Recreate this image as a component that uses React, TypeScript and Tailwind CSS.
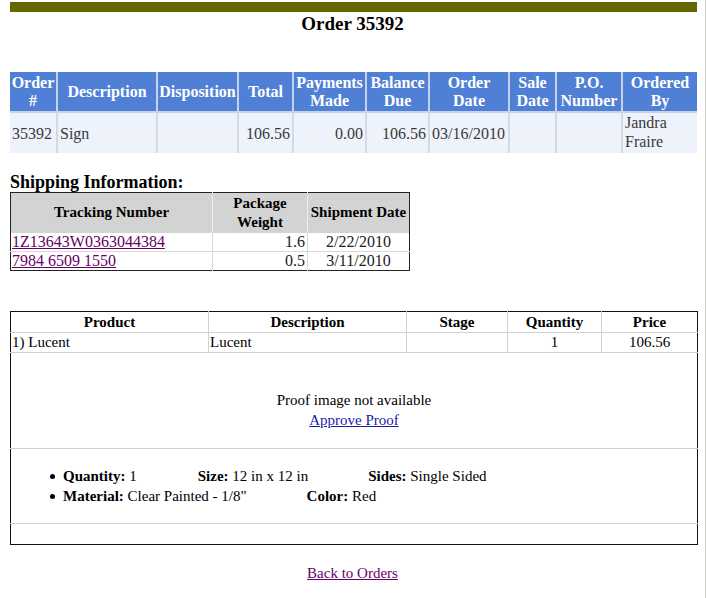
import React from "react";

const serif = { fontFamily: '"Liberation Serif", "Times New Roman", serif' };

const blueHead = [
  { w: 47, t: ["Order", "#"] },
  { w: 100, t: ["Description"] },
  { w: 81, t: ["Disposition"] },
  { w: 55, t: ["Total"] },
  { w: 73, t: ["Payments", "Made"] },
  { w: 63, t: ["Balance", "Due"] },
  { w: 80, t: ["Order", "Date"] },
  { w: 47, t: ["Sale", "Date"] },
  { w: 66, t: ["P.O.", "Number"] },
  { w: 75, t: ["Ordered", "By"] },
];

export default function App() {
  return (
    <div className="bg-white text-black w-[706px] h-[598px] overflow-hidden border-r border-[#d4d0c8]" style={serif}>
      <div className="px-[10px]">
        <div className="mt-[2px] h-[10px] bg-[#666600] w-[687px]" />
        <div className="h-[22px] flex items-center justify-center text-[19px] font-bold leading-none">Order 35392</div>

        {/* Order summary table */}
        <table className="mt-[38px] w-[687px] border-collapse table-fixed text-[16px]">
          <colgroup>
            {blueHead.map((c, i) => (
              <col key={i} style={{ width: c.w }} />
            ))}
          </colgroup>
          <thead>
            <tr className="h-[40px] bg-[#4f80d6] text-white">
              {blueHead.map((c, i) => (
                <th
                  key={i}
                  className={`p-0 font-bold text-center leading-[18px] align-middle ${i > 0 ? "border-l-2 border-[#c7d3ec]" : ""}`}
                >
                  {c.t.map((l, j) => (
                    <div key={j}>{l}</div>
                  ))}
                </th>
              ))}
            </tr>
          </thead>
          <tbody>
            <tr className="h-[41px] bg-[#eef2fa] text-[#3a3a3a] leading-[19px] border-t-2 border-[#c7d3ec]">
              <td className="px-[2px] text-left">35392</td>
              <td className="px-[2px] border-l-2 border-[#d5d9e0]">Sign</td>
              <td className="px-[2px] border-l-2 border-[#d5d9e0]"></td>
              <td className="px-[2px] border-l-2 border-[#d5d9e0] text-right">106.56</td>
              <td className="px-[2px] border-l-2 border-[#d5d9e0] text-right">0.00</td>
              <td className="px-[2px] border-l-2 border-[#d5d9e0] text-right">106.56</td>
              <td className="px-[2px] border-l-2 border-[#d5d9e0]">03/16/2010</td>
              <td className="px-[2px] border-l-2 border-[#d5d9e0]"></td>
              <td className="px-[2px] border-l-2 border-[#d5d9e0]"></td>
              <td className="px-[2px] border-l-2 border-[#d5d9e0] align-top">
                <div>Jandra</div>
                <div>Fraire</div>
              </td>
            </tr>
          </tbody>
        </table>

        {/* Shipping */}
        <div className="mt-[19px] h-[20px] text-[18px] font-bold leading-[20px]">Shipping Information:</div>
        <table className="w-[399px] border-collapse table-fixed border border-[#222] text-[15px]">
          <colgroup>
            <col style={{ width: 202 }} />
            <col style={{ width: 95 }} />
            <col style={{ width: 102 }} />
          </colgroup>
          <thead>
            <tr className="h-[40px] bg-[#d3d3d3]">
              <th className="p-0 font-bold text-center leading-[19px]">Tracking Number</th>
              <th className="p-0 font-bold text-center leading-[19px] border-l border-[#eeeeee]">
                <div>Package</div>
                <div>Weight</div>
              </th>
              <th className="p-0 font-bold text-center leading-[19px] border-l border-[#eeeeee]">Shipment Date</th>
            </tr>
          </thead>
          <tbody className="text-[#222] text-[16px]">
            <tr className="h-[19px] leading-[18px]">
              <td className="px-[1px]">
                <a href="#" className="text-[#660066] underline">1Z13643W0363044384</a>
              </td>
              <td className="px-[2px] text-right border-l border-[#d8d8d8]">1.6</td>
              <td className="px-[2px] text-center border-l border-[#d8d8d8]">2/22/2010</td>
            </tr>
            <tr className="h-[19px] leading-[18px] border-t border-[#d8d8d8]">
              <td className="px-[1px]">
                <a href="#" className="text-[#660066] underline">7984 6509 1550</a>
              </td>
              <td className="px-[2px] text-right border-l border-[#d8d8d8]">0.5</td>
              <td className="px-[2px] text-center border-l border-[#d8d8d8]">3/11/2010</td>
            </tr>
          </tbody>
        </table>

        {/* Products */}
        <table className="mt-[40px] w-[687px] border-collapse table-fixed border border-[#111] text-[15px]">
          <colgroup>
            <col style={{ width: 198 }} />
            <col style={{ width: 198 }} />
            <col style={{ width: 101 }} />
            <col style={{ width: 94 }} />
            <col style={{ width: 96 }} />
          </colgroup>
          <thead>
            <tr className="h-[21px] leading-[20px]">
              <th className="p-0 font-bold text-center">Product</th>
              <th className="p-0 font-bold text-center border-l border-[#d0d0d0]">Description</th>
              <th className="p-0 font-bold text-center border-l border-[#d0d0d0]">Stage</th>
              <th className="p-0 font-bold text-center border-l border-[#d0d0d0]">Quantity</th>
              <th className="p-0 font-bold text-center border-l border-[#d0d0d0]">Price</th>
            </tr>
          </thead>
          <tbody>
            <tr className="h-[20px] leading-[19px] border-t border-[#d0d0d0]">
              <td className="px-[1px]">1) Lucent</td>
              <td className="px-[1px] border-l border-[#d0d0d0]">Lucent</td>
              <td className="px-[1px] border-l border-[#d0d0d0]"></td>
              <td className="px-[1px] text-center border-l border-[#d0d0d0]">1</td>
              <td className="px-[1px] text-center border-l border-[#d0d0d0]">106.56</td>
            </tr>
            <tr className="h-[95px] border-t border-[#d0d0d0]">
              <td colSpan={5} className="p-0 pt-[37px] pb-[18px] align-top text-center leading-[20px]">
                <div>Proof image not available</div>
                <a href="#" className="text-[#1a1aa8] underline">Approve Proof</a>
              </td>
            </tr>
            <tr className="h-[75px] border-t border-[#d0d0d0]">
              <td colSpan={5} className="p-0 align-middle">
                <ul className="pl-[39px] leading-[20px]">
                  <li className="flex items-center">
                    <span className="w-[5px] h-[5px] rounded-full bg-black mr-[8px]" />
                    <span><b>Quantity:</b> 1</span>
                    <span className="ml-[61px]"><b>Size:</b> 12 in x 12 in</span>
                    <span className="ml-[60px]"><b>Sides:</b> Single Sided</span>
                  </li>
                  <li className="flex items-center">
                    <span className="w-[5px] h-[5px] rounded-full bg-black mr-[8px]" />
                    <span><b>Material:</b> Clear Painted - 1/8"</span>
                    <span className="ml-[60px]"><b>Color:</b> Red</span>
                  </li>
                </ul>
              </td>
            </tr>
            <tr className="h-[21px] border-t border-[#d0d0d0]">
              <td colSpan={5} className="p-0"></td>
            </tr>
          </tbody>
        </table>

        <div className="mt-[18px] h-[20px] leading-[20px] text-center text-[15px]">
          <a href="#" className="text-[#660066] underline">Back to Orders</a>
        </div>
      </div>
    </div>
  );
}
